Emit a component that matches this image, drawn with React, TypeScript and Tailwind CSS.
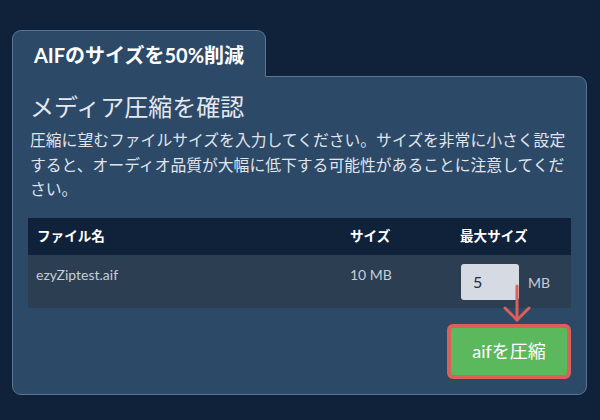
import React from 'react';

const FONT = "font-['Lato','Noto_Sans_CJK_JP',sans-serif]";

const App: React.FC = () => {
    return (
        <div className={`w-[600px] h-[420px] bg-[#10223a] pt-[30px] pl-[12px] pr-[13px] ${FONT}`}>
            {/* tab */}
            <div className="relative z-10 -mb-px w-[254px] h-[47px] rounded-t-[9px] border border-b-0 border-[#5a7494] bg-[#2c4968] flex items-center justify-center">
                <span className="text-white font-bold text-[20px] leading-none pt-[1px]">AIFのサイズを50%削減</span>
            </div>

            {/* card */}
            <div className="rounded-b-[9px] rounded-tr-[9px] border border-[#5a7494] bg-[#2c4968] px-[15px] pt-[14px] pb-[15px]">
                <h1 className="px-[2px] text-[24px] leading-[32px] text-[#e4e8ee] font-normal">メディア圧縮を確認</h1>
                <p className="mt-[5px] px-[2px] text-[15.8px] leading-[24.5px] text-[#e1e5eb]">
                    圧縮に望むファイルサイズを入力してください。サイズを非常に小さく設定すると、オーディオ品質が大幅に低下する可能性があることに注意してください。
                </p>

                {/* table */}
                <div className="mt-[16px]">
                    <div className="grid grid-cols-[313px_110px_121px] h-[37px] items-center bg-[#10223a] text-white font-bold text-[13.6px]">
                        <div className="pl-[9px]">ファイル名</div>
                        <div className="pl-[9px]">サイズ</div>
                        <div className="pl-[9px]">最大サイズ</div>
                    </div>
                    <div className="relative grid grid-cols-[313px_110px_121px] h-[53px] bg-[#2c3e52] text-[#c8cdd5] text-[14px]">
                        <div className="pl-[8px] pt-[9px]">ezyZiptest.aif</div>
                        <div className="pl-[9px] pt-[9px]">10 MB</div>
                        <div className="pl-[10px] pt-[9px] flex items-start gap-[9px]">
                            <div className="w-[58px] h-[36px] rounded-[3px] bg-[#d6dbe3] text-[#1e2b3a] text-[16px] flex items-center pl-[12px]">5</div>
                            <span className="mt-[8px] text-[14px]">MB</span>
                        </div>

                        {/* red arrow pointing at the button */}
                        <svg className="absolute left-[474px] top-[30px] overflow-visible" width="30" height="40" viewBox="0 0 30 40">
                            <line x1="15" y1="1" x2="15" y2="35" stroke="#dc5f5a" strokeWidth="3" strokeLinecap="round" />
                            <polyline points="3,23 15,35 27,23" fill="none" stroke="#dc5f5a" strokeWidth="3" strokeLinecap="round" strokeLinejoin="round" />
                        </svg>
                    </div>
                </div>

                <div className="mt-[16px] flex justify-end">
                    <button className="w-[124px] h-[55px] rounded-[6px] border-[4px] border-[#dc5f5a] bg-[#5cb85c] text-white text-[18px] flex items-center justify-center">
                        aifを圧縮
                    </button>
                </div>
            </div>
        </div>
    );
};

export default App;
